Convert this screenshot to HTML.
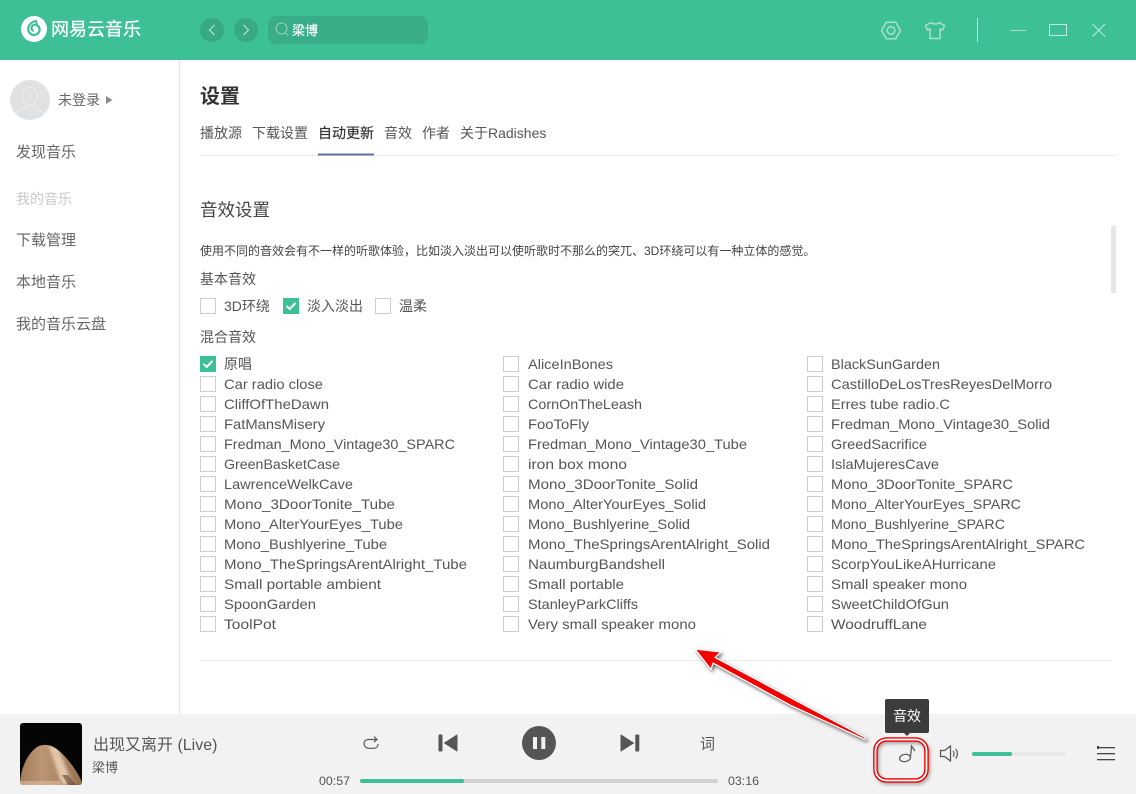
<!DOCTYPE html>
<html><head><meta charset="utf-8"><style>
html,body{margin:0;padding:0;background:#fff;width:1136px;height:794px;overflow:hidden}
svg{display:block}
text{font-family:"Liberation Sans","Noto Sans CJK SC",sans-serif;font-size:14px;fill:#555}
.b{fill:#fff;stroke:#cdcdcd;stroke-width:1}
.c{fill:#3ec096}
.k{fill:none;stroke:#fff;stroke-width:2}
</style></head><body>
<svg width="1136" height="794" viewBox="0 0 1136 794" xmlns="http://www.w3.org/2000/svg">
<defs>
<symbol id="bx" viewBox="0 0 16 16" overflow="visible"><rect class="b" x=".5" y=".5" width="15" height="15"/></symbol>
<symbol id="ck" viewBox="0 0 16 16" overflow="visible"><rect class="c" width="16" height="16"/><path class="k" d="M3.500 8l3.200 3L12.500 5"/></symbol>
<linearGradient id="sk" x1="0" y1="0" x2="1" y2="0"><stop offset="0" stop-color="#a17c5b"/><stop offset=".35" stop-color="#bd9674"/><stop offset="1" stop-color="#94704f"/></linearGradient>
<filter id="sh" x="-20%" y="-20%" width="150%" height="150%"><feDropShadow dx="1.500" dy="2" stdDeviation="1.800" flood-color="#000" flood-opacity=".6"/></filter>
<filter id="bl" x="-30%" y="-30%" width="160%" height="160%"><feGaussianBlur stdDeviation="1.500"/></filter>
<clipPath id="alb"><path d="M20 782C21 770 26 755 37 747 44 743 52 745 58 750 68 758 77 771 82 782a3 3 0 0 1-3 3H23a3 3 0 0 1-3-3z"/></clipPath>
</defs>

<!-- header -->
<rect width="1136" height="60" fill="#3ec096"/>
<circle cx="34" cy="29" r="13" fill="#fff"/>
<path d="M36.800 20.800c-4.200.6-8.600 3.400-8.600 8.300 0 3.400 2.700 5.800 5.800 5.800s5.600-2.300 5.600-5.300c0-2.900-2.200-4.900-4.600-4.900-2 0-3.500 1.500-3.500 3.400 0 1.500 1 2.700 2.400 2.700" fill="none" stroke="#3ec096" stroke-width="2.200"/>
<path d="M36.800 20.800c-.8 1.500-.2 3.200.8 4.800" fill="none" stroke="#3ec096" stroke-width="1.800"/>
<text x="51" y="35.500" style="font-size:18px;fill:#fff;stroke:#fff;stroke-width:.25">网易云音乐</text>
<circle cx="212" cy="30" r="12" fill="#38a985"/>
<path d="M214.500 25l-5 5 5 5" fill="none" stroke="#b6e4d4" stroke-width="1.200"/>
<circle cx="246" cy="30" r="12" fill="#38a985"/>
<path d="M243.500 25l5 5-5 5" fill="none" stroke="#b6e4d4" stroke-width="1.200"/>
<rect x="268" y="16" width="160" height="28" rx="8" fill="#38ad88"/>
<circle cx="281.500" cy="28.500" r="5.500" fill="none" stroke="#8ed5bd" stroke-width="1"/>
<path d="M285.500 33l2.500 2.500" stroke="#8ed5bd" stroke-width="1"/>
<text x="292" y="35" style="font-size:13px;fill:#fff;stroke:#fff;stroke-width:.2">梁博</text>
<path d="M881.500 30.500l4.800-8.300h9.400l4.800 8.300-4.800 8.300h-9.400z" fill="none" stroke="#a9e0cd" stroke-width="1.500"/>
<circle cx="891" cy="30.500" r="3.800" fill="none" stroke="#a9e0cd" stroke-width="1.500"/>
<path d="M931 22.500l-5.500 3 1.800 4.500 2.700-1v9.500h10v-9.500l2.700 1 1.800-4.500-5.500-3c-.8 2-6.200 2-8 0z" fill="none" stroke="#a9e0cd" stroke-width="1.500" stroke-linejoin="round"/>
<rect x="977" y="18" width="1" height="24" fill="#cdeee2"/>
<rect x="1010" y="30" width="16" height="1" fill="#a9e0cd"/>
<rect x="1049.500" y="24.500" width="17" height="11" fill="none" stroke="#c2e9dc" stroke-width="1"/>
<path d="M1092.500 24l12.500 12.500M1105 24l-12.500 12.500" stroke="#c2e9dc" stroke-width="1"/>

<!-- sidebar -->
<rect x="179" y="60" width="1" height="654" fill="#e2e2e2"/>
<circle cx="30" cy="100" r="20" fill="#e0e1e3"/>
<ellipse cx="30" cy="96" rx="7.500" ry="9" fill="none" stroke="#ebecee" stroke-width="1.200"/>
<path d="M16 114c3-5 8-5 10-8M44 114c-3-5-8-5-10-8" fill="none" stroke="#ebecee" stroke-width="1.200"/>
<text x="58" y="105" style="font-size:14px;fill:#666">未登录</text>
<path d="M106 96l6.500 4-6.500 4z" fill="#8c8c8c"/>
<text x="16" y="157" style="font-size:15px;fill:#666">发现音乐</text>
<text x="16" y="204" style="font-size:14px;fill:#c8c8c8">我的音乐</text>
<text x="16" y="245" style="font-size:15px;fill:#666">下载管理</text>
<text x="16" y="287" style="font-size:15px;fill:#666">本地音乐</text>
<text x="16" y="329" style="font-size:15px;fill:#666">我的音乐云盘</text>

<!-- content head -->
<text x="200" y="103" style="font-size:20px;font-weight:bold;fill:#333">设置</text>
<text x="200" y="138" style="fill:#555">播放源</text>
<text x="252" y="138" style="fill:#555">下载设置</text>
<text x="318" y="138" style="fill:#333;stroke:#333;stroke-width:.2">自动更新</text>
<text x="384" y="138" style="fill:#555">音效</text>
<text x="422" y="138" style="fill:#555">作者</text>
<text x="460" y="138" style="fill:#555">关于Radishes</text>
<rect x="200" y="155" width="916" height="1" fill="#e8e8ec"/>
<rect x="318" y="153.500" width="56" height="2" fill="#6a6f9b"/>

<text x="200" y="216" style="font-size:17.500px;fill:#444">音效设置</text>
<text x="200" y="255" style="font-size:12px;fill:#444">使用不同的音效会有不一样的听歌体验，比如淡入淡出可以使听歌时不那么的突兀、3D环绕可以有一种立体的感觉。</text>
<rect x="1111" y="226" width="5" height="67" fill="#e6e6e6"/>
<text x="200" y="284" style="fill:#555">基本音效</text>
<use href="#bx" x="200" y="298" width="16" height="16"/>
<text x="224" y="311">3D环绕</text>
<use href="#ck" x="283" y="298" width="16" height="16"/>
<text x="307" y="311">淡入淡出</text>
<use href="#bx" x="375" y="298" width="16" height="16"/>
<text x="399" y="311">温柔</text>
<text x="200" y="342" style="fill:#555">混合音效</text>

<!-- col 1 -->
<use href="#ck" x="200" y="356" width="16" height="16"/><text x="224" y="369">原唱</text>
<use href="#bx" x="200" y="376" width="16" height="16"/><text x="224" y="389" textLength="99" lengthAdjust="spacingAndGlyphs">Car radio close</text>
<use href="#bx" x="200" y="396" width="16" height="16"/><text x="224" y="409" textLength="105" lengthAdjust="spacingAndGlyphs">CliffOfTheDawn</text>
<use href="#bx" x="200" y="416" width="16" height="16"/><text x="224" y="429" textLength="101" lengthAdjust="spacingAndGlyphs">FatMansMisery</text>
<use href="#bx" x="200" y="436" width="16" height="16"/><text x="224" y="449" textLength="231" lengthAdjust="spacingAndGlyphs">Fredman_Mono_Vintage30_SPARC</text>
<use href="#bx" x="200" y="456" width="16" height="16"/><text x="224" y="469" textLength="116" lengthAdjust="spacingAndGlyphs">GreenBasketCase</text>
<use href="#bx" x="200" y="476" width="16" height="16"/><text x="224" y="489" textLength="129" lengthAdjust="spacingAndGlyphs">LawrenceWelkCave</text>
<use href="#bx" x="200" y="496" width="16" height="16"/><text x="224" y="509" textLength="171" lengthAdjust="spacingAndGlyphs">Mono_3DoorTonite_Tube</text>
<use href="#bx" x="200" y="516" width="16" height="16"/><text x="224" y="529" textLength="179" lengthAdjust="spacingAndGlyphs">Mono_AlterYourEyes_Tube</text>
<use href="#bx" x="200" y="536" width="16" height="16"/><text x="224" y="549" textLength="163" lengthAdjust="spacingAndGlyphs">Mono_Bushlyerine_Tube</text>
<use href="#bx" x="200" y="556" width="16" height="16"/><text x="224" y="569" textLength="243" lengthAdjust="spacingAndGlyphs">Mono_TheSpringsArentAlright_Tube</text>
<use href="#bx" x="200" y="576" width="16" height="16"/><text x="224" y="589" textLength="157" lengthAdjust="spacingAndGlyphs">Small portable ambient</text>
<use href="#bx" x="200" y="596" width="16" height="16"/><text x="224" y="609" textLength="92" lengthAdjust="spacingAndGlyphs">SpoonGarden</text>
<use href="#bx" x="200" y="616" width="16" height="16"/><text x="224" y="629" textLength="52" lengthAdjust="spacingAndGlyphs">ToolPot</text>

<!-- col 2 -->
<use href="#bx" x="503" y="356" width="16" height="16"/><text x="528" y="369" textLength="85" lengthAdjust="spacingAndGlyphs">AliceInBones</text>
<use href="#bx" x="503" y="376" width="16" height="16"/><text x="528" y="389" textLength="96" lengthAdjust="spacingAndGlyphs">Car radio wide</text>
<use href="#bx" x="503" y="396" width="16" height="16"/><text x="528" y="409" textLength="114" lengthAdjust="spacingAndGlyphs">CornOnTheLeash</text>
<use href="#bx" x="503" y="416" width="16" height="16"/><text x="528" y="429" textLength="61" lengthAdjust="spacingAndGlyphs">FooToFly</text>
<use href="#bx" x="503" y="436" width="16" height="16"/><text x="528" y="449" textLength="219" lengthAdjust="spacingAndGlyphs">Fredman_Mono_Vintage30_Tube</text>
<use href="#bx" x="503" y="456" width="16" height="16"/><text x="528" y="469" textLength="99" lengthAdjust="spacingAndGlyphs">iron box mono</text>
<use href="#bx" x="503" y="476" width="16" height="16"/><text x="528" y="489" textLength="170" lengthAdjust="spacingAndGlyphs">Mono_3DoorTonite_Solid</text>
<use href="#bx" x="503" y="496" width="16" height="16"/><text x="528" y="509" textLength="178" lengthAdjust="spacingAndGlyphs">Mono_AlterYourEyes_Solid</text>
<use href="#bx" x="503" y="516" width="16" height="16"/><text x="528" y="529" textLength="162" lengthAdjust="spacingAndGlyphs">Mono_Bushlyerine_Solid</text>
<use href="#bx" x="503" y="536" width="16" height="16"/><text x="528" y="549" textLength="242" lengthAdjust="spacingAndGlyphs">Mono_TheSpringsArentAlright_Solid</text>
<use href="#bx" x="503" y="556" width="16" height="16"/><text x="528" y="569" textLength="137" lengthAdjust="spacingAndGlyphs">NaumburgBandshell</text>
<use href="#bx" x="503" y="576" width="16" height="16"/><text x="528" y="589" textLength="96" lengthAdjust="spacingAndGlyphs">Small portable</text>
<use href="#bx" x="503" y="596" width="16" height="16"/><text x="528" y="609" textLength="110" lengthAdjust="spacingAndGlyphs">StanleyParkCliffs</text>
<use href="#bx" x="503" y="616" width="16" height="16"/><text x="528" y="629" textLength="168" lengthAdjust="spacingAndGlyphs">Very small speaker mono</text>

<!-- col 3 -->
<use href="#bx" x="807" y="356" width="16" height="16"/><text x="831" y="369" textLength="109" lengthAdjust="spacingAndGlyphs">BlackSunGarden</text>
<use href="#bx" x="807" y="376" width="16" height="16"/><text x="831" y="389" textLength="221" lengthAdjust="spacingAndGlyphs">CastilloDeLosTresReyesDelMorro</text>
<use href="#bx" x="807" y="396" width="16" height="16"/><text x="831" y="409" textLength="119" lengthAdjust="spacingAndGlyphs">Erres tube radio.C</text>
<use href="#bx" x="807" y="416" width="16" height="16"/><text x="831" y="429" textLength="219" lengthAdjust="spacingAndGlyphs">Fredman_Mono_Vintage30_Solid</text>
<use href="#bx" x="807" y="436" width="16" height="16"/><text x="831" y="449" textLength="96" lengthAdjust="spacingAndGlyphs">GreedSacrifice</text>
<use href="#bx" x="807" y="456" width="16" height="16"/><text x="831" y="469" textLength="108" lengthAdjust="spacingAndGlyphs">IslaMujeresCave</text>
<use href="#bx" x="807" y="476" width="16" height="16"/><text x="831" y="489" textLength="182" lengthAdjust="spacingAndGlyphs">Mono_3DoorTonite_SPARC</text>
<use href="#bx" x="807" y="496" width="16" height="16"/><text x="831" y="509" textLength="190" lengthAdjust="spacingAndGlyphs">Mono_AlterYourEyes_SPARC</text>
<use href="#bx" x="807" y="516" width="16" height="16"/><text x="831" y="529" textLength="174" lengthAdjust="spacingAndGlyphs">Mono_Bushlyerine_SPARC</text>
<use href="#bx" x="807" y="536" width="16" height="16"/><text x="831" y="549" textLength="254" lengthAdjust="spacingAndGlyphs">Mono_TheSpringsArentAlright_SPARC</text>
<use href="#bx" x="807" y="556" width="16" height="16"/><text x="831" y="569" textLength="165" lengthAdjust="spacingAndGlyphs">ScorpYouLikeAHurricane</text>
<use href="#bx" x="807" y="576" width="16" height="16"/><text x="831" y="589" textLength="136" lengthAdjust="spacingAndGlyphs">Small speaker mono</text>
<use href="#bx" x="807" y="596" width="16" height="16"/><text x="831" y="609" textLength="118" lengthAdjust="spacingAndGlyphs">SweetChildOfGun</text>
<use href="#bx" x="807" y="616" width="16" height="16"/><text x="831" y="629" textLength="96" lengthAdjust="spacingAndGlyphs">WoodruffLane</text>

<rect x="200" y="660" width="911" height="1" fill="#ebebf1"/>

<!-- player -->
<rect y="714" width="1136" height="80" fill="#f2f2f2"/>
<rect x="20" y="723" width="62" height="62" rx="3" fill="#050505"/>
<path d="M20 782C21 770 26 755 37 747 44 743 52 745 58 750 68 758 77 771 82 782a3 3 0 0 1-3 3H23a3 3 0 0 1-3-3z" fill="url(#sk)"/>
<g clip-path="url(#alb)">
<path d="M48 744l10 3 14 36-10 2z" fill="#e3c6aa" filter="url(#bl)"/>
<path d="M68 785l-6-10 6 0 8 10z" fill="#5a4230" opacity=".6"/>
<rect x="20" y="781" width="40" height="4" fill="#d7b696" opacity=".7"/>
</g>
<text x="93" y="750" style="font-size:16px;fill:#555">出现又离开 (Live)</text>
<text x="92" y="772" style="font-size:13px;fill:#555">梁博</text>
<path d="M377 739.500h-8.500c-2.800 0-4.500 1.800-4.500 4.300 0 2.500 2 4.500 4.700 4.500h5c2.600 0 4.300-1.700 4.300-4.300" fill="none" stroke="#555" stroke-width="1.200"/>
<path d="M374 736.500l3 3-3 2.500" fill="none" stroke="#555" stroke-width="1.200"/>
<rect x="438.500" y="734.500" width="4" height="17" rx="1" fill="#555"/>
<path d="M457 735v16l-12.500-8z" fill="#555" stroke="#555" stroke-linejoin="round"/>
<circle cx="539" cy="743" r="17" fill="#555"/>
<rect x="533" y="737" width="4" height="12" fill="#f2f2f2"/>
<rect x="541.300" y="737" width="4" height="12" fill="#f2f2f2"/>
<path d="M621 735v16l12.500-8z" fill="#555" stroke="#555" stroke-linejoin="round"/>
<rect x="635.300" y="734.500" width="4" height="17" rx="1" fill="#555"/>
<text x="700" y="749" style="font-size:15px;fill:#555">词</text>
<text x="319" y="785" textLength="31" lengthAdjust="spacingAndGlyphs" style="font-size:12px;fill:#555">00:57</text>
<rect x="360" y="779" width="358" height="4" rx="2" fill="#d2d2d2"/>
<rect x="360" y="779" width="104" height="4" rx="2" fill="#3ec096"/>
<text x="728" y="785" textLength="31" lengthAdjust="spacingAndGlyphs" style="font-size:12px;fill:#555">03:16</text>

<!-- annotation box -->
<rect x="875.500" y="739.500" width="51" height="41" rx="11" fill="none" stroke="#000" stroke-opacity=".6" stroke-width="4" filter="url(#sh)"/>
<rect x="875.500" y="739.500" width="51" height="41" rx="11" fill="none" stroke="#f00000" stroke-width="4.600"/>
<rect x="875.500" y="739.500" width="51" height="41" rx="11" fill="none" stroke="#fff" stroke-width="1.800"/>

<!-- tooltip -->
<rect x="885" y="699" width="44" height="34" rx="2" fill="#3c3c3c"/>
<path d="M904 733h6l-3 3z" fill="#3c3c3c"/>
<text x="893" y="721" style="font-size:14px;fill:#fff">音效</text>

<!-- note / volume / list -->
<ellipse cx="905" cy="758" rx="5.500" ry="3.600" transform="rotate(-10 905 758)" fill="none" stroke="#555" stroke-width="1.200"/>
<path d="M910.500 757.500l1-11.500 3.500 5" fill="none" stroke="#555" stroke-width="1.200"/>
<path d="M940.500 750.500h4l6-4.500v15l-6-4.500h-4z" fill="none" stroke="#555" stroke-width="1.200"/>
<path d="M953 751c1.500 1.500 1.500 4 0 5.500M955.500 749c2.500 2.500 2.500 7 0 9.500" fill="none" stroke="#555" stroke-width="1.200"/>
<rect x="972" y="752" width="94" height="4" rx="2" fill="#e9e9e9"/>
<rect x="972" y="752" width="40" height="4" rx="2" fill="#3ec096"/>
<rect x="1097" y="747" width="18" height="1.300" fill="#444"/>
<rect x="1097" y="753" width="18" height="1.300" fill="#444"/>
<rect x="1097" y="759" width="18" height="1.300" fill="#444"/>
<rect x="1097" y="746" width="2" height="3" fill="#444"/>

<!-- arrow -->
<path d="M695 649L721 652 715 657.500 866 738 865 739.500 790 705 713 663 711 669.500z" fill="#f40000" stroke="#fff" stroke-width="1.200" stroke-linejoin="round" filter="url(#sh)"/>
</svg>
</body></html>
